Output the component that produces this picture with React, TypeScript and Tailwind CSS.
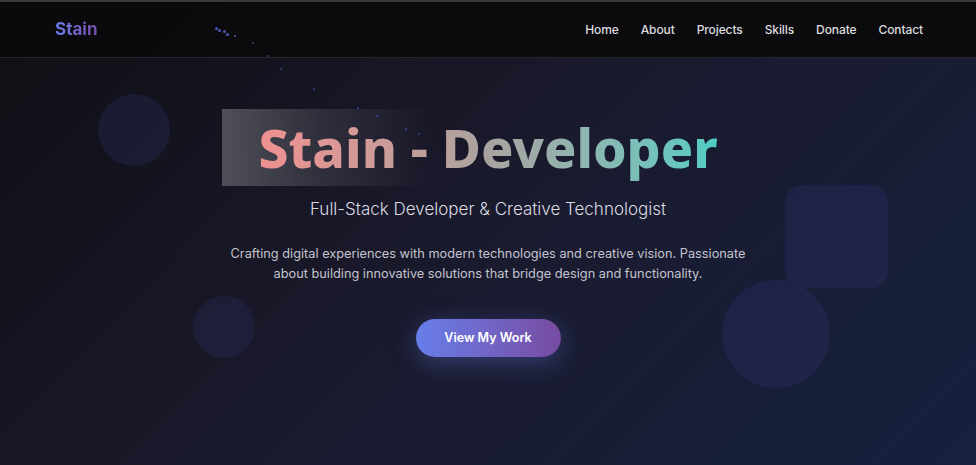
export default function App() {
  const links = ["Home", "About", "Projects", "Skills", "Donate", "Contact"];

  // particle trail near the top (x, y, size)
  const dots: [number, number, number][] = [
    [215, 27, 3],
    [218, 29, 3],
    [223, 30, 3],
    [226, 33, 3],
    [234, 35, 2],
    [252, 42, 2],
    [267, 55, 2],
    [280, 68, 2],
    [313, 88, 2],
    [357, 107, 2],
    [376, 115, 2],
    [405, 128, 2],
    [418, 133, 2],
  ];

  return (
    <div
      className="relative w-full h-[465px] overflow-hidden bg-[linear-gradient(135deg,#0f0f14_0%,#1a1a2e_50%,#16213e_100%)] text-white"
      style={{ fontFamily: "Inter, 'Noto Sans', sans-serif" }}
    >
      {/* Navbar */}
      <nav className="relative z-20 h-[58px] border-t-2 border-[#3a3a3a] border-b border-b-[#26262c] bg-[#0b0b0d]/95 flex items-center justify-between pl-[55px] pr-[53px]">
        <span className="text-[17px] font-bold bg-gradient-to-r from-[#667eea] to-[#764ba2] bg-clip-text text-transparent">
          Stain
        </span>
        <ul className="flex items-center gap-[22px] pt-[1px]">
          {links.map((l) => (
            <li key={l} className="text-[12px] font-medium tracking-[-0.1px] text-[#dcdcdf]">
              {l}
            </li>
          ))}
        </ul>
      </nav>

      {/* Particles */}
      {dots.map(([x, y, s], i) => (
        <span
          key={i}
          className="absolute z-30 rounded-full bg-[#4f5fc9]"
          style={{ left: x, top: y, width: s, height: s, opacity: i < 5 ? 0.9 : 0.6 }}
        />
      ))}

      {/* Floating shapes */}
      <div className="absolute left-[98px] top-[94px] w-[72px] h-[72px] rounded-full bg-[#2a2a5c]/35" />
      <div className="absolute left-[193px] top-[296px] w-[62px] h-[62px] rounded-full bg-[#2a2a5c]/35" />
      <div className="absolute left-[785px] top-[185px] w-[103px] h-[103px] rounded-[18px] bg-[#2e2e66]/35" />
      <div className="absolute left-[722px] top-[280px] w-[108px] h-[108px] rounded-full bg-[#2e2e66]/35" />

      {/* Hero */}
      <section className="relative z-10 flex flex-col items-center pt-[51px]">
        <div className="relative">
          <div className="absolute left-[-36px] top-0 w-[208px] h-[77px] bg-gradient-to-r from-white/25 via-white/10 to-transparent" />
          <h1
            className="relative text-[53.5px] leading-[77px] font-extrabold bg-gradient-to-r from-[#f09090] via-[#a9a3a0] to-[#4ecdc4] bg-clip-text text-transparent"
            style={{ fontFamily: "'Noto Sans', Inter, sans-serif" }}
          >
            Stain - Developer
          </h1>
        </div>
        <p className="mt-[10px] text-[17px] leading-[27px] font-light text-[#dadae0]">
          Full-Stack Developer &amp; Creative Technologist
        </p>
        <p className="mt-[21px] w-[520px] text-center text-[12.75px] leading-[20px] text-[#c4c4cc]">
          Crafting digital experiences with modern technologies and creative vision. Passionate
          about building innovative solutions that bridge design and functionality.
        </p>
        <button className="mt-[35px] w-[145px] h-[38px] rounded-full bg-gradient-to-r from-[#667eea] to-[#764ba2] text-[12.5px] font-semibold text-white shadow-[0_6px_24px_rgba(102,126,234,0.35)]">
          View My Work
        </button>
      </section>
    </div>
  );
}
